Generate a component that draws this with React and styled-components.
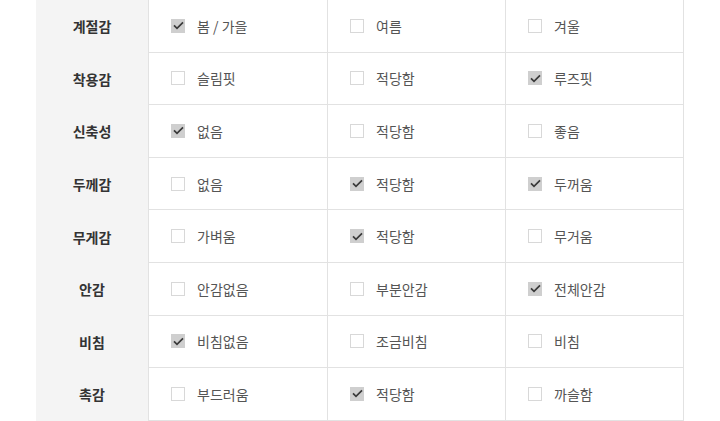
import React from "react";
import styled, { createGlobalStyle } from "styled-components";

const rows = [
  { label: "계절감", options: ["봄 / 가을", "여름", "겨울"], checked: [0] },
  { label: "착용감", options: ["슬림핏", "적당함", "루즈핏"], checked: [2] },
  { label: "신축성", options: ["없음", "적당함", "좋음"], checked: [0] },
  { label: "두께감", options: ["없음", "적당함", "두꺼움"], checked: [1, 2] },
  { label: "무게감", options: ["가벼움", "적당함", "무거움"], checked: [1] },
  { label: "안감", options: ["안감없음", "부분안감", "전체안감"], checked: [2] },
  { label: "비침", options: ["비침없음", "조금비침", "비침"], checked: [0] },
  { label: "촉감", options: ["부드러움", "적당함", "까슬함"], checked: [1] },
];

function App() {
  return (
    <>
      <GlobalStyle />
      <Page>
        <Table>
          {rows.map((row) => (
            <Row key={row.label}>
              <Label>{row.label}</Label>
              {row.options.map((opt, i) => (
                <Cell key={opt + i}>
                  <Box checked={row.checked.includes(i)}>
                    {row.checked.includes(i) && (
                      <svg width="11" height="9" viewBox="0 0 11 9">
                        <path d="M1 4.4 L4 7.4 L10 1.3" fill="none" stroke="#3a3a3a" strokeWidth="1.7" />
                      </svg>
                    )}
                  </Box>
                  <OptText>{opt}</OptText>
                </Cell>
              ))}
            </Row>
          ))}
        </Table>
      </Page>
    </>
  );
}

const GlobalStyle = createGlobalStyle`
  body {
    margin: 0;
    background: #fff;
    font-family: "Noto Sans CJK KR", "Noto Sans", sans-serif;
  }
`;

const Page = styled.div`
  padding: 0 36px;
  height: 421px;
  overflow: hidden;
`;

const Table = styled.div`
  width: 648px;
  margin-top: -1px;
  border-top: 1px solid #e2e2e2;
`;

const Row = styled.div`
  display: grid;
  grid-template-columns: 113px 179px 178px 178px;
  height: 52.6px;
`;

const Label = styled.div`
  background: #f4f4f4;
  display: flex;
  align-items: center;
  justify-content: center;
  font-size: 14px;
  font-weight: 700;
  color: #333;
  border-right: 1px solid #e2e2e2;
`;

const Cell = styled.div`
  display: flex;
  align-items: center;
  padding-left: 22px;
  border-right: 1px solid #e2e2e2;
  border-bottom: 1px solid #e2e2e2;
`;

const Box = styled.span`
  width: 14px;
  height: 14px;
  box-sizing: border-box;
  border: 1px solid ${(p) => (p.checked ? "#cfcfcf" : "#d8d8d8")};
  background: ${(p) => (p.checked ? "#cfcfcf" : "#fff")};
  display: flex;
  align-items: center;
  justify-content: center;
  margin-right: 12px;
`;

const OptText = styled.span`
  font-size: 14px;
  color: #555;
`;

export default App;
